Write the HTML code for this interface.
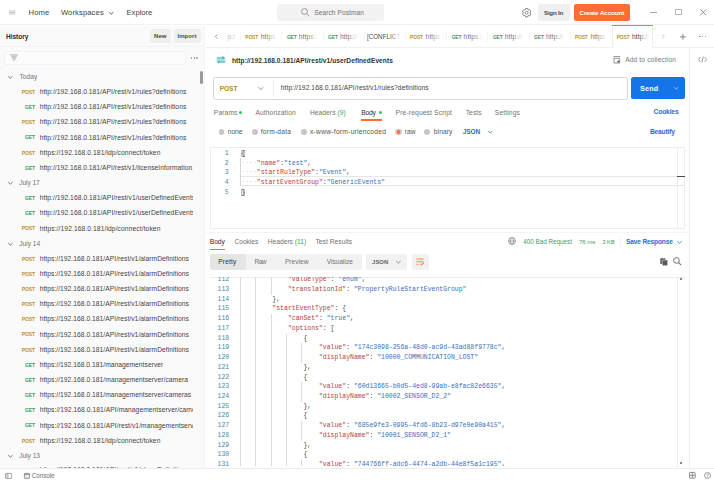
<!DOCTYPE html>
<html><head><meta charset="utf-8"><title>Postman</title>
<style>
*{box-sizing:border-box;margin:0;padding:0}
html,body{width:714px;height:480px;overflow:hidden;background:#fff}
body{position:relative;font-family:"Liberation Sans",sans-serif;color:#3a3a3a;font-size:6.5px}
.t{position:absolute;white-space:nowrap;line-height:10px;height:10px}
.b{font-weight:bold}
.abs{position:absolute}
.m{font-family:"Liberation Mono",monospace;font-size:6.47px;position:absolute;white-space:pre;line-height:9.74px;height:9.74px}
.k{color:#b54242}.s{color:#3570bd}.p{color:#4a4a4a}.d{color:#cfcfcf}
.ln{color:#3f8aa3;text-align:right}
.post{color:#bb9230;font-weight:bold}
.get{color:#37a062;font-weight:bold}
svg{position:absolute;overflow:visible}
</style></head><body>

<div class="abs" style="left:0;top:0;width:714px;height:25.4px;background:#fff;border-bottom:1px solid #f0f0f0"></div>
<svg style="left:9px;top:10px" width="6.4" height="5" viewBox="0 0 6.4 5"><path d="M0 1 H6.4 M0 2.5 H6.4 M0 4 H6.4" stroke="#b4b4b4" stroke-width="0.75"/></svg>
<div class="t" style="left:28.50px;top:7.70px;font-size:7.7px;letter-spacing:0.120px;color:#444;">Home</div>
<div class="t" style="left:60.90px;top:7.70px;font-size:7.7px;letter-spacing:0.075px;color:#444;">Workspaces</div>
<svg style="left:108.80px;top:11.75px" width="4.60" height="2.30" viewBox="0 0 10 5"><path d="M0.6 0.4 L5 4.6 L9.4 0.4" fill="none" stroke="#555" stroke-width="2.17"/></svg>
<div class="t" style="left:126.50px;top:7.70px;font-size:7.7px;letter-spacing:-0.035px;color:#444;">Explore</div>
<div class="abs" style="left:277px;top:4px;width:107px;height:17px;background:#f2f2f2;border-radius:2px"></div>
<svg style="left:301px;top:8.3px" width="9" height="9" viewBox="0 0 9 9"><circle cx="3.5" cy="3.5" r="2.9" fill="none" stroke="#777" stroke-width="0.7"/><path d="M5.6 5.6 L8.2 8.2" stroke="#777" stroke-width="0.7"/></svg>
<div class="t" style="left:314.30px;top:7.60px;font-size:6.6px;letter-spacing:0.062px;color:#737373;">Search Postman</div>
<svg style="left:521.9px;top:7.8px" width="9.4" height="9.4" viewBox="0 0 10 10"><path d="M3.73 0.58 L6.27 0.58 L6.29 1.64 L7.27 2.20 L8.20 1.69 L9.46 3.89 L8.56 4.44 L8.56 5.56 L9.46 6.11 L8.20 8.31 L7.27 7.80 L6.29 8.36 L6.27 9.42 L3.73 9.42 L3.71 8.36 L2.73 7.80 L1.80 8.31 L0.54 6.11 L1.44 5.56 L1.44 4.44 L0.54 3.89 L1.80 1.69 L2.73 2.20 L3.71 1.64 Z" fill="none" stroke="#707070" stroke-width="0.85" stroke-linejoin="round"/><circle cx="5" cy="5" r="1.5" fill="none" stroke="#707070" stroke-width="0.8"/></svg>
<div class="abs" style="left:537.5px;top:4.2px;width:32.3px;height:16.6px;background:#f0f0f0;border-radius:2px"></div>
<div class="t b" style="left:544.00px;top:7.60px;font-size:6.2px;letter-spacing:-0.244px;color:#4a4a4a;">Sign In</div>
<div class="abs" style="left:574.2px;top:4.2px;width:55.7px;height:16.6px;background:#ff6c37;border-radius:2px"></div>
<div class="t b" style="left:579.60px;top:7.60px;font-size:6.2px;letter-spacing:-0.061px;color:#fff;">Create Account</div>
<div class="abs" style="left:650px;top:11.8px;width:7px;height:0.8px;background:#a8a8a8"></div>
<div class="abs" style="left:675px;top:9.1px;width:6.6px;height:6.3px;border:0.8px solid #b8b8b8"></div>
<svg style="left:699.8px;top:9px" width="6.6" height="6.6" viewBox="0 0 7 7"><path d="M0.3 0.3 L6.7 6.7 M6.7 0.3 L0.3 6.7" stroke="#777" stroke-width="0.8"/></svg>
<div class="abs" style="left:0;top:26.4px;width:205.2px;height:442px;background:#fafafa;border-right:1px solid #f4f4f4"></div>
<div class="t b" style="left:5.90px;top:31.90px;font-size:6.6px;letter-spacing:-0.023px;color:#2a2a2a;">History</div>
<div class="abs" style="left:0;top:45.6px;width:205px;height:1px;background:#f3f3f3"></div>
<div class="abs" style="left:150px;top:29.4px;width:20.6px;height:13.4px;background:#efefef;border-radius:2px"></div>
<div class="t b" style="left:154.10px;top:31.00px;font-size:6.0px;letter-spacing:0.031px;color:#4a4a4a;">New</div>
<div class="abs" style="left:173.5px;top:29.4px;width:27.5px;height:13.4px;background:#efefef;border-radius:2px"></div>
<div class="t b" style="left:177.40px;top:31.00px;font-size:6.0px;letter-spacing:0.087px;color:#4a4a4a;">Import</div>
<div class="abs" style="left:4.4px;top:51px;width:181.4px;height:13.8px;background:#fcfcfc;border:1px solid #f2f2f2;border-radius:2px"></div>
<svg style="left:10.2px;top:54.2px" width="8" height="7.4" viewBox="0 0 8 7.4"><path d="M0 0.2 H8 L4.6 6.9 H3.4 Z" fill="#d6d6d6"/><path d="M0.2 0.8 H7.8 M1.3 2.6 H6.7 M2.3 4.4 H5.7 M3.2 6.1 H4.8" stroke="#c2c2c2" stroke-width="0.9" fill="none"/></svg>
<div class="abs" style="left:190.6px;top:57.3px;width:1.7px;height:1.7px;border-radius:1px;background:#9a9a9a"></div>
<div class="abs" style="left:193.5px;top:57.3px;width:1.7px;height:1.7px;border-radius:1px;background:#9a9a9a"></div>
<div class="abs" style="left:196.4px;top:57.3px;width:1.7px;height:1.7px;border-radius:1px;background:#9a9a9a"></div>
<div class="abs" style="left:200.4px;top:70.6px;width:3.1px;height:13px;background:#999;border-radius:1.5px"></div>
<div class="abs" style="left:0;top:66px;width:199px;height:402.7px;overflow:hidden">
<svg style="left:7.90px;top:9.90px" width="4.80" height="2.40" viewBox="0 0 10 5"><path d="M0.6 0.4 L5 4.6 L9.4 0.4" fill="none" stroke="#666" stroke-width="1.88"/></svg>
<div class="t" style="left:19.50px;top:5.90px;font-size:6.6px;letter-spacing:0.072px;color:#737373;">Today</div>
<div class="t post" style="left:14.9px;width:20px;text-align:right;top:20.86px;font-size:5px;letter-spacing:-0.12px">POST</div>
<div class="t" style="left:39.70px;top:21.06px;font-size:6.7px;letter-spacing:0.047px;color:#444;">http://192.168.0.181/API/rest/v1/rules?definitions</div>
<div class="t get" style="left:14.9px;width:20px;text-align:right;top:36.02px;font-size:5px;letter-spacing:-0.12px">GET</div>
<div class="t" style="left:39.70px;top:36.22px;font-size:6.7px;letter-spacing:0.047px;color:#444;">http://192.168.0.181/API/rest/v1/rules?definitions</div>
<div class="t post" style="left:14.9px;width:20px;text-align:right;top:51.18px;font-size:5px;letter-spacing:-0.12px">POST</div>
<div class="t" style="left:39.70px;top:51.38px;font-size:6.7px;letter-spacing:0.047px;color:#444;">http://192.168.0.181/API/rest/v1/rules?definitions</div>
<div class="t get" style="left:14.9px;width:20px;text-align:right;top:66.34px;font-size:5px;letter-spacing:-0.12px">GET</div>
<div class="t" style="left:39.70px;top:66.54px;font-size:6.7px;letter-spacing:0.047px;color:#444;">http://192.168.0.181/API/rest/v1/rules?definitions</div>
<div class="t post" style="left:14.9px;width:20px;text-align:right;top:81.50px;font-size:5px;letter-spacing:-0.12px">POST</div>
<div class="t" style="left:39.70px;top:81.70px;font-size:6.7px;letter-spacing:0.094px;color:#444;">https://192.168.0.181/idp/connect/token</div>
<div class="t get" style="left:14.9px;width:20px;text-align:right;top:96.66px;font-size:5px;letter-spacing:-0.12px">GET</div>
<div class="t" style="left:39.70px;top:96.86px;font-size:6.7px;letter-spacing:0.047px;color:#444;">http://192.168.0.181/API/rest/v1/licenseInformation</div>
<svg style="left:7.90px;top:116.02px" width="4.80" height="2.40" viewBox="0 0 10 5"><path d="M0.6 0.4 L5 4.6 L9.4 0.4" fill="none" stroke="#666" stroke-width="1.88"/></svg>
<div class="t" style="left:19.20px;top:112.02px;font-size:6.6px;letter-spacing:-0.052px;color:#737373;">July 17</div>
<div class="t get" style="left:14.9px;width:20px;text-align:right;top:126.98px;font-size:5px;letter-spacing:-0.12px">GET</div>
<div class="t" style="left:39.7px;width:153.1px;overflow:hidden;top:127.18px;font-size:6.7px;letter-spacing:0.062px;color:#444">http://192.168.0.181/API/rest/v1/userDefinedEvents</div>
<div class="t get" style="left:14.9px;width:20px;text-align:right;top:142.14px;font-size:5px;letter-spacing:-0.12px">GET</div>
<div class="t" style="left:39.7px;width:153.1px;overflow:hidden;top:142.34px;font-size:6.7px;letter-spacing:0.062px;color:#444">http://192.168.0.181/API/rest/v1/userDefinedEvents</div>
<div class="t post" style="left:14.9px;width:20px;text-align:right;top:157.30px;font-size:5px;letter-spacing:-0.12px">POST</div>
<div class="t" style="left:39.70px;top:157.50px;font-size:6.7px;letter-spacing:0.094px;color:#444;">https://192.168.0.181/idp/connect/token</div>
<svg style="left:7.90px;top:176.66px" width="4.80" height="2.40" viewBox="0 0 10 5"><path d="M0.6 0.4 L5 4.6 L9.4 0.4" fill="none" stroke="#666" stroke-width="1.88"/></svg>
<div class="t" style="left:19.20px;top:172.66px;font-size:6.6px;letter-spacing:0.015px;color:#737373;">July 14</div>
<div class="t post" style="left:14.9px;width:20px;text-align:right;top:187.62px;font-size:5px;letter-spacing:-0.12px">POST</div>
<div class="t" style="left:39.70px;top:187.82px;font-size:6.7px;letter-spacing:0.039px;color:#444;">https://192.168.0.181/API/rest/v1/alarmDefinitions</div>
<div class="t post" style="left:14.9px;width:20px;text-align:right;top:202.78px;font-size:5px;letter-spacing:-0.12px">POST</div>
<div class="t" style="left:39.70px;top:202.98px;font-size:6.7px;letter-spacing:0.039px;color:#444;">https://192.168.0.181/API/rest/v1/alarmDefinitions</div>
<div class="t post" style="left:14.9px;width:20px;text-align:right;top:217.94px;font-size:5px;letter-spacing:-0.12px">POST</div>
<div class="t" style="left:39.70px;top:218.14px;font-size:6.7px;letter-spacing:0.039px;color:#444;">https://192.168.0.181/API/rest/v1/alarmDefinitions</div>
<div class="t post" style="left:14.9px;width:20px;text-align:right;top:233.10px;font-size:5px;letter-spacing:-0.12px">POST</div>
<div class="t" style="left:39.70px;top:233.30px;font-size:6.7px;letter-spacing:0.039px;color:#444;">https://192.168.0.181/API/rest/v1/alarmDefinitions</div>
<div class="t post" style="left:14.9px;width:20px;text-align:right;top:248.26px;font-size:5px;letter-spacing:-0.12px">POST</div>
<div class="t" style="left:39.70px;top:248.46px;font-size:6.7px;letter-spacing:0.039px;color:#444;">https://192.168.0.181/API/rest/v1/alarmDefinitions</div>
<div class="t post" style="left:14.9px;width:20px;text-align:right;top:263.42px;font-size:5px;letter-spacing:-0.12px">POST</div>
<div class="t" style="left:39.70px;top:263.62px;font-size:6.7px;letter-spacing:0.039px;color:#444;">https://192.168.0.181/API/rest/v1/alarmDefinitions</div>
<div class="t post" style="left:14.9px;width:20px;text-align:right;top:278.58px;font-size:5px;letter-spacing:-0.12px">POST</div>
<div class="t" style="left:39.70px;top:278.78px;font-size:6.7px;letter-spacing:0.039px;color:#444;">https://192.168.0.181/API/rest/v1/alarmDefinitions</div>
<div class="t get" style="left:14.9px;width:20px;text-align:right;top:293.74px;font-size:5px;letter-spacing:-0.12px">GET</div>
<div class="t" style="left:39.70px;top:293.94px;font-size:6.7px;letter-spacing:0.034px;color:#444;">https://192.168.0.181/managementserver</div>
<div class="t get" style="left:14.9px;width:20px;text-align:right;top:308.90px;font-size:5px;letter-spacing:-0.12px">GET</div>
<div class="t" style="left:39.70px;top:309.10px;font-size:6.7px;letter-spacing:0.040px;color:#444;">https://192.168.0.181/managementserver/camera</div>
<div class="t get" style="left:14.9px;width:20px;text-align:right;top:324.06px;font-size:5px;letter-spacing:-0.12px">GET</div>
<div class="t" style="left:39.70px;top:324.26px;font-size:6.7px;letter-spacing:0.038px;color:#444;">https://192.168.0.181/managementserver/cameras</div>
<div class="t get" style="left:14.9px;width:20px;text-align:right;top:339.22px;font-size:5px;letter-spacing:-0.12px">GET</div>
<div class="t" style="left:39.7px;width:153.1px;overflow:hidden;top:339.42px;font-size:6.7px;letter-spacing:0.062px;color:#444">https://192.168.0.181/API/managementserver/cameras</div>
<div class="t get" style="left:14.9px;width:20px;text-align:right;top:354.38px;font-size:5px;letter-spacing:-0.12px">GET</div>
<div class="t" style="left:39.7px;width:153.1px;overflow:hidden;top:354.58px;font-size:6.7px;letter-spacing:0.062px;color:#444">https://192.168.0.181/API/rest/v1/managementserver</div>
<div class="t post" style="left:14.9px;width:20px;text-align:right;top:369.54px;font-size:5px;letter-spacing:-0.12px">POST</div>
<div class="t" style="left:39.70px;top:369.74px;font-size:6.7px;letter-spacing:0.094px;color:#444;">https://192.168.0.181/idp/connect/token</div>
<svg style="left:7.90px;top:388.90px" width="4.80" height="2.40" viewBox="0 0 10 5"><path d="M0.6 0.4 L5 4.6 L9.4 0.4" fill="none" stroke="#666" stroke-width="1.88"/></svg>
<div class="t" style="left:19.20px;top:384.90px;font-size:6.6px;letter-spacing:-0.019px;color:#737373;">July 13</div>
<div class="t" style="left:39.70px;top:398.90px;font-size:6.7px;letter-spacing:0.039px;color:#444;">https://192.168.0.181/API/rest/v1/alarmDefinitions</div>
</div>
<div class="abs" style="left:0;top:468.4px;width:714px;height:13px;background:#fff;border-top:1px solid #ececec"></div>
<svg style="left:5px;top:472.6px" width="7" height="5.8" viewBox="0 0 7 5.8"><rect x="0.4" y="0.4" width="6.2" height="5" rx="0.5" fill="none" stroke="#909090" stroke-width="0.8"/><path d="M2.9 0.4 V5.4" stroke="#909090" stroke-width="0.8"/><path d="M0.9 1.7 H2.4 M0.9 2.9 H2.4 M0.9 4.1 H2.4" stroke="#a8a8a8" stroke-width="0.6"/></svg>
<svg style="left:23.7px;top:472.7px" width="5.8" height="5.8" viewBox="0 0 6 6"><rect x="0.4" y="0.4" width="5.2" height="5.2" rx="0.6" fill="none" stroke="#777" stroke-width="0.8"/><path d="M0.4 1.6 H5.6" stroke="#777" stroke-width="0.8"/><path d="M1.5 2.8 L2.5 3.6 L1.5 4.4 M3 4.5 H4.4" fill="none" stroke="#777" stroke-width="0.5"/></svg>
<div class="t" style="left:31.80px;top:470.90px;font-size:6.5px;letter-spacing:-0.158px;color:#747474;">Console</div>
<svg style="left:689.3px;top:472.2px" width="6.6" height="6.6" viewBox="0 0 6.6 6.6"><rect x="0.45" y="0.45" width="5.7" height="5.7" rx="0.5" fill="none" stroke="#858585" stroke-width="0.9"/><path d="M3.3 0.4 V6.2 M0.4 3.3 H6.2" stroke="#858585" stroke-width="0.9"/></svg>
<svg style="left:704.4px;top:472.1px" width="7" height="7" viewBox="0 0 7 7"><circle cx="3.5" cy="3.5" r="3" fill="none" stroke="#858585" stroke-width="0.8"/><path d="M2.6 2.8 Q2.6 1.9 3.5 1.9 Q4.4 1.9 4.4 2.7 Q4.4 3.3 3.5 3.7 V4.3 M3.5 4.9 V5.5" fill="none" stroke="#858585" stroke-width="0.6"/></svg>
<div class="abs" style="left:688.8px;top:48px;width:26px;height:419.6px;background:#fff;border-left:1px solid #f0f0f0"></div>
<svg style="left:698px;top:56.4px" width="9.1" height="7" viewBox="0 0 9 7"><path d="M2.3 1 L0.5 3.5 L2.3 6 M6.7 1 L8.5 3.5 L6.7 6 M5.3 0.5 L3.7 6.5" fill="none" stroke="#777" stroke-width="0.7"/></svg>
<div class="abs" style="left:206px;top:26.4px;width:508px;height:21.6px;background:#fff;border-bottom:1px solid #f0f0f0"></div>
<svg style="left:215px;top:33.9px" width="2.6" height="5" viewBox="0 0 3 5"><path d="M2.6 0.3 L0.4 2.5 L2.6 4.7" fill="none" stroke="#666" stroke-width="0.8"/></svg>
<div class="t" style="left:227.4px;top:32.1px;font-size:6.6px;color:#c4c4c4">p:/</div>
<div class="abs" style="left:240.20px;top:31px;width:1px;height:11px;background:#f5f5f5"></div>
<div class="abs" style="left:242.00px;top:28px;width:39.70px;height:18px;overflow:hidden">
<div class="t post" style="left:3.3px;top:4.5px;font-size:4.9px;letter-spacing:-0.12px">POST</div>
<div class="t" style="left:18.8px;top:4.1px;font-size:6.7px;letter-spacing:0.07px;color:#777">https://192.168</div>
<div class="abs" style="left:24px;top:0;width:17.200000000000003px;height:18px;background:linear-gradient(90deg,rgba(255,255,255,0) 0,#fff 11px,#fff 100%)"></div>
</div>
<div class="abs" style="left:281.40px;top:31px;width:1px;height:11px;background:#f5f5f5"></div>
<div class="abs" style="left:283.20px;top:28px;width:39.70px;height:18px;overflow:hidden">
<div class="t get" style="left:3.7px;top:4.5px;font-size:4.9px;letter-spacing:-0.12px">GET</div>
<div class="t" style="left:15.6px;top:4.1px;font-size:6.7px;letter-spacing:0.07px;color:#777">https://192.168</div>
<div class="abs" style="left:24px;top:0;width:17.200000000000003px;height:18px;background:linear-gradient(90deg,rgba(255,255,255,0) 0,#fff 11px,#fff 100%)"></div>
</div>
<div class="abs" style="left:322.60px;top:31px;width:1px;height:11px;background:#f5f5f5"></div>
<div class="abs" style="left:324.40px;top:28px;width:39.70px;height:18px;overflow:hidden">
<div class="t get" style="left:3.7px;top:4.5px;font-size:4.9px;letter-spacing:-0.12px">GET</div>
<div class="t" style="left:15.6px;top:4.1px;font-size:6.7px;letter-spacing:0.07px;color:#777">http://192.168</div>
<div class="abs" style="left:24px;top:0;width:17.200000000000003px;height:18px;background:linear-gradient(90deg,rgba(255,255,255,0) 0,#fff 11px,#fff 100%)"></div>
</div>
<div class="abs" style="left:363.80px;top:31px;width:1px;height:11px;background:#f5f5f5"></div>
<div class="abs" style="left:365.60px;top:28px;width:39.70px;height:18px;overflow:hidden">
<div class="t" style="left:1.3px;top:4.1px;font-size:6.3px;color:#4a4a4a">[CONFLICT] POST</div>
<div class="abs" style="left:24px;top:0;width:17.200000000000003px;height:18px;background:linear-gradient(90deg,rgba(255,255,255,0) 0,#fff 11px,#fff 100%)"></div>
</div>
<div class="abs" style="left:405.00px;top:31px;width:1px;height:11px;background:#f5f5f5"></div>
<div class="abs" style="left:406.80px;top:28px;width:39.70px;height:18px;overflow:hidden">
<div class="t post" style="left:3.3px;top:4.5px;font-size:4.9px;letter-spacing:-0.12px">POST</div>
<div class="t" style="left:18.8px;top:4.1px;font-size:6.7px;letter-spacing:0.07px;color:#777">https://192.168</div>
<div class="abs" style="left:24px;top:0;width:17.200000000000003px;height:18px;background:linear-gradient(90deg,rgba(255,255,255,0) 0,#fff 11px,#fff 100%)"></div>
</div>
<div class="abs" style="left:446.20px;top:31px;width:1px;height:11px;background:#f5f5f5"></div>
<div class="abs" style="left:448.00px;top:28px;width:39.70px;height:18px;overflow:hidden">
<div class="t get" style="left:3.7px;top:4.5px;font-size:4.9px;letter-spacing:-0.12px">GET</div>
<div class="t" style="left:15.6px;top:4.1px;font-size:6.7px;letter-spacing:0.07px;color:#777">https://192.168</div>
<div class="abs" style="left:24px;top:0;width:17.200000000000003px;height:18px;background:linear-gradient(90deg,rgba(255,255,255,0) 0,#fff 11px,#fff 100%)"></div>
</div>
<div class="abs" style="left:487.40px;top:31px;width:1px;height:11px;background:#f5f5f5"></div>
<div class="abs" style="left:489.20px;top:28px;width:39.70px;height:18px;overflow:hidden">
<div class="t get" style="left:3.7px;top:4.5px;font-size:4.9px;letter-spacing:-0.12px">GET</div>
<div class="t" style="left:15.6px;top:4.1px;font-size:6.7px;letter-spacing:0.07px;color:#777">http://192.168</div>
<div class="abs" style="left:24px;top:0;width:17.200000000000003px;height:18px;background:linear-gradient(90deg,rgba(255,255,255,0) 0,#fff 11px,#fff 100%)"></div>
</div>
<div class="abs" style="left:528.60px;top:31px;width:1px;height:11px;background:#f5f5f5"></div>
<div class="abs" style="left:530.40px;top:28px;width:39.70px;height:18px;overflow:hidden">
<div class="t get" style="left:3.7px;top:4.5px;font-size:4.9px;letter-spacing:-0.12px">GET</div>
<div class="t" style="left:15.6px;top:4.1px;font-size:6.7px;letter-spacing:0.07px;color:#777">http://192.168</div>
<div class="abs" style="left:24px;top:0;width:17.200000000000003px;height:18px;background:linear-gradient(90deg,rgba(255,255,255,0) 0,#fff 11px,#fff 100%)"></div>
</div>
<div class="abs" style="left:569.80px;top:31px;width:1px;height:11px;background:#f5f5f5"></div>
<div class="abs" style="left:571.60px;top:28px;width:39.70px;height:18px;overflow:hidden">
<div class="t post" style="left:3.3px;top:4.5px;font-size:4.9px;letter-spacing:-0.12px">POST</div>
<div class="t" style="left:18.8px;top:4.1px;font-size:6.7px;letter-spacing:0.07px;color:#777">https://192.168</div>
<div class="abs" style="left:24px;top:0;width:17.200000000000003px;height:18px;background:linear-gradient(90deg,rgba(255,255,255,0) 0,#fff 11px,#fff 100%)"></div>
</div>
<div class="abs" style="left:612.20px;top:24.8px;width:41.20px;height:23.6px;background:#fff;border-left:1px solid #f0f0f0;border-right:1px solid #f0f0f0"></div>
<div class="abs" style="left:612.20px;top:24.8px;width:41.20px;height:1.6px;background:#ff7645"></div>
<div class="abs" style="left:612.80px;top:28px;width:39.70px;height:18px;overflow:hidden">
<div class="t post" style="left:3.9px;top:4.5px;font-size:4.9px;letter-spacing:-0.12px">POST</div>
<div class="t" style="left:19.2px;top:4.1px;font-size:6.7px;letter-spacing:0.07px;color:#4a4a4a">http://192.168</div>
<div class="abs" style="left:26px;top:0;width:15.200000000000003px;height:18px;background:linear-gradient(90deg,rgba(255,255,255,0) 0,#fff 11px,#fff 100%)"></div>
</div>
<svg style="left:662.2px;top:33.9px" width="2.6" height="5" viewBox="0 0 3 5"><path d="M0.4 0.3 L2.6 2.5 L0.4 4.7" fill="none" stroke="#aaa" stroke-width="0.8"/></svg>
<svg style="left:680.2px;top:33.5px" width="5.8" height="5.8" viewBox="0 0 6 6"><path d="M3 0 V6 M0 3 H6" stroke="#777" stroke-width="0.9"/></svg>
<div class="abs" style="left:698.9px;top:35.7px;width:1.7px;height:1.7px;border-radius:1px;background:#8a8a8a"></div>
<div class="abs" style="left:701.8px;top:35.7px;width:1.7px;height:1.7px;border-radius:1px;background:#8a8a8a"></div>
<div class="abs" style="left:704.6999999999999px;top:35.7px;width:1.7px;height:1.7px;border-radius:1px;background:#8a8a8a"></div>
<svg style="left:216.2px;top:56.2px" width="10" height="7.8" viewBox="0 0 10 8"><rect x="0.6" y="0.8" width="8.8" height="6.4" rx="0.8" fill="#c9ecef"/><path d="M0.8 1.9 H7.8 M6.6 0.5 L8.2 1.9 L6.6 3.3 M9.2 6.1 H2.2 M3.4 4.7 L1.8 6.1 L3.4 7.5" fill="none" stroke="#58bcc5" stroke-width="1.2"/><path d="M0.6 4 H9.4" stroke="#7fd0d6" stroke-width="1.2" stroke-dasharray="1.4 0.7"/></svg>
<div class="t b" style="left:232.00px;top:55.80px;font-size:6.6px;letter-spacing:0.059px;color:#333;">http://192.168.0.181/API/rest/v1/userDefinedEvents</div>
<svg style="left:613.1px;top:56px" width="7.7" height="7.7" viewBox="0 0 8 8"><path d="M0.5 0.6 H7.5 M1 2.4 H7 V7.3 H1 Z" fill="none" stroke="#666" stroke-width="0.7"/><rect x="4.6" y="4.8" width="2" height="2" fill="#555"/></svg>
<div class="t" style="left:625.20px;top:55.30px;font-size:6.6px;letter-spacing:0.154px;color:#7a7a7a;">Add to collection</div>
<div class="abs" style="left:213.3px;top:76.9px;width:414.5px;height:22.9px;background:#fff;border:1px solid #d6d6d6;border-radius:2.5px"></div>
<div class="abs" style="left:273.3px;top:80.5px;width:1px;height:16px;background:#eeeeee"></div>
<div class="t b" style="left:219.70px;top:84.10px;font-size:6.6px;letter-spacing:-0.057px;color:#b88a1c;">POST</div>
<svg style="left:258.30px;top:87.28px" width="5.70" height="2.85" viewBox="0 0 10 5"><path d="M0.6 0.4 L5 4.6 L9.4 0.4" fill="none" stroke="#777" stroke-width="1.40"/></svg>
<div class="t" style="left:280.8px;top:82.8px;font-size:6.7px;letter-spacing:0.075px;color:#444">http://192.168.0.181/API/rest/v1/rules?definitions</div>
<div class="abs" style="left:631.3px;top:77.4px;width:54px;height:21.7px;background:#1474e8;border-radius:2.5px"></div>
<div class="t b" style="left:640.10px;top:83.60px;font-size:7.2px;letter-spacing:0.199px;color:#fff;">Send</div>
<svg style="left:674.30px;top:87.35px" width="4.60" height="2.30" viewBox="0 0 10 5"><path d="M0.6 0.4 L5 4.6 L9.4 0.4" fill="none" stroke="#bcd8fa" stroke-width="1.74"/></svg>
<div class="t" style="left:213.80px;top:107.60px;font-size:6.7px;letter-spacing:0.123px;color:#737373;">Params</div>
<div class="abs" style="left:239.2px;top:110.8px;width:3.3px;height:3.3px;border-radius:2px;background:#2cc466"></div>
<div class="t" style="left:255.40px;top:107.60px;font-size:6.7px;letter-spacing:0.108px;color:#737373;">Authorization</div>
<div class="t" style="left:310.00px;top:107.60px;font-size:6.7px;letter-spacing:0.032px;color:#737373;">Headers <span style="color:#37a062">(9)</span></div>
<div class="t" style="left:361.30px;top:107.60px;font-size:6.7px;letter-spacing:-0.224px;color:#2e2e2e;">Body</div>
<div class="abs" style="left:379.1px;top:110.8px;width:3.3px;height:3.3px;border-radius:2px;background:#2cc466"></div>
<div class="abs" style="left:361.3px;top:119.4px;width:21px;height:1.2px;background:#ff6c37"></div>
<div class="t" style="left:395.60px;top:107.60px;font-size:6.7px;letter-spacing:0.141px;color:#737373;">Pre-request Script</div>
<div class="t" style="left:465.70px;top:107.60px;font-size:6.7px;letter-spacing:0.091px;color:#737373;">Tests</div>
<div class="t" style="left:494.80px;top:107.60px;font-size:6.7px;letter-spacing:0.127px;color:#737373;">Settings</div>
<div class="t b" style="left:653.60px;top:106.80px;font-size:6.7px;letter-spacing:-0.161px;color:#2b6bd0;">Cookies</div>
<div class="abs" style="left:218.55px;top:129.05px;width:5.9px;height:5.9px;border-radius:3px;background:#c6c6c6"></div>
<div class="t" style="left:227.70px;top:127.00px;font-size:6.7px;letter-spacing:-0.002px;color:#555;">none</div>
<div class="abs" style="left:252.05px;top:129.05px;width:5.9px;height:5.9px;border-radius:3px;background:#c6c6c6"></div>
<div class="t" style="left:260.80px;top:127.00px;font-size:6.7px;letter-spacing:0.191px;color:#555;">form-data</div>
<div class="abs" style="left:301.05px;top:129.05px;width:5.9px;height:5.9px;border-radius:3px;background:#c6c6c6"></div>
<div class="t" style="left:310.00px;top:127.00px;font-size:6.7px;letter-spacing:0.249px;color:#555;">x-www-form-urlencoded</div>
<div class="abs" style="left:395.20px;top:128.70px;width:6.6px;height:6.6px;border-radius:3.4px;background:#d2c8c4"></div>
<div class="abs" style="left:396.60px;top:130.10px;width:3.8px;height:3.8px;border-radius:2px;background:#ff6c37"></div>
<div class="t" style="left:404.70px;top:127.00px;font-size:6.7px;letter-spacing:0.052px;color:#555;">raw</div>
<div class="abs" style="left:424.25px;top:129.05px;width:5.9px;height:5.9px;border-radius:3px;background:#c6c6c6"></div>
<div class="t" style="left:433.80px;top:127.00px;font-size:6.7px;letter-spacing:0.070px;color:#555;">binary</div>
<div class="t b" style="left:462.70px;top:126.80px;font-size:6.5px;letter-spacing:-0.067px;color:#2b6bd0;">JSON</div>
<svg style="left:488.40px;top:131.20px" width="4.40" height="2.20" viewBox="0 0 10 5"><path d="M0.6 0.4 L5 4.6 L9.4 0.4" fill="none" stroke="#2b6bd0" stroke-width="1.82"/></svg>
<div class="t b" style="left:649.90px;top:126.50px;font-size:6.7px;letter-spacing:-0.191px;color:#2b6bd0;">Beautify</div>
<div class="abs" style="left:210.2px;top:147.4px;width:475.3px;height:81.9px;background:#fff;border:1px solid #ededed"></div>
<div class="abs" style="left:676.8px;top:148px;width:1px;height:80px;background:#ededed"></div>
<div class="abs" style="left:241px;top:176px;width:443.5px;height:10.2px;border-top:1px solid #e6e6e6;border-bottom:1px solid #e6e6e6"></div>
<div class="abs" style="left:677.3px;top:175.8px;width:7.5px;height:1.3px;background:#4a4a4a"></div>
<div class="abs" style="left:240.4px;top:157.6px;width:0.7px;height:28.6px;background:#d6d6d6"></div>
<div class="abs" style="left:241px;top:149.6px;width:4.2px;height:7.6px;border:0.6px solid #bdbdbd;background:rgba(0,0,0,0.04)"></div>
<div class="abs" style="left:241px;top:188.5px;width:4.2px;height:7.6px;border:0.6px solid #bdbdbd;background:rgba(0,0,0,0.04)"></div>
<div class="m ln" style="left:215px;width:13.6px;top:149.13px">1</div>
<div class="m" style="left:241.3px;top:149.13px"><span class="p">{</span></div>
<div class="m ln" style="left:215px;width:13.6px;top:158.79px">2</div>
<div class="m" style="left:241.3px;top:158.79px"><span class="d">····</span><span class="k">"name"</span><span class="p">:</span><span class="s">"test"</span><span class="p">,</span></div>
<div class="m ln" style="left:215px;width:13.6px;top:168.45px">3</div>
<div class="m" style="left:241.3px;top:168.45px"><span class="d">····</span><span class="k">"startRuleType"</span><span class="p">:</span><span class="s">"Event"</span><span class="p">,</span></div>
<div class="m ln" style="left:215px;width:13.6px;top:178.11px">4</div>
<div class="m" style="left:241.3px;top:178.11px"><span class="d">····</span><span class="k">"startEventGroup"</span><span class="p">:</span><span class="s">"GenericEvents"</span></div>
<div class="m ln" style="left:215px;width:13.6px;top:187.77px">5</div>
<div class="m" style="left:241.3px;top:187.77px"><span class="p">}</span></div>
<div class="abs" style="left:206px;top:231.6px;width:484px;height:1px;background:#f4f4f4"></div>
<div class="t" style="left:209.80px;top:236.50px;font-size:6.7px;letter-spacing:-0.091px;color:#2e2e2e;">Body</div>
<div class="abs" style="left:209.8px;top:248.5px;width:15px;height:1.2px;background:#ff6c37"></div>
<div class="t" style="left:234.60px;top:236.50px;font-size:6.7px;letter-spacing:-0.084px;color:#737373;">Cookies</div>
<div class="t" style="left:267.70px;top:236.50px;font-size:6.7px;letter-spacing:-0.000px;color:#737373;">Headers <span style="color:#37a062">(11)</span></div>
<div class="t" style="left:315.40px;top:236.50px;font-size:6.7px;letter-spacing:0.028px;color:#737373;">Test Results</div>
<svg style="left:507.9px;top:237.4px" width="8" height="8" viewBox="0 0 8 8"><circle cx="4" cy="4" r="3.4" fill="none" stroke="#777" stroke-width="0.7"/><ellipse cx="4" cy="4" rx="1.5" ry="3.4" fill="none" stroke="#777" stroke-width="0.6"/><path d="M0.6 4 H7.4" stroke="#777" stroke-width="0.6"/></svg>
<div class="t" style="left:523.20px;top:236.50px;font-size:6.3px;letter-spacing:0.008px;color:#4e9a66;">400 Bad Request</div>
<div class="t" style="left:578.90px;top:236.50px;font-size:6.2px;letter-spacing:-0.121px;color:#4e9a66;">76 ms</div>
<div class="t" style="left:602.20px;top:236.50px;font-size:6.1px;letter-spacing:-0.208px;color:#4e9a66;">3 KB</div>
<div class="abs" style="left:619.8px;top:236.3px;width:1px;height:10.4px;background:#f3f3f3"></div>
<div class="t b" style="left:625.90px;top:236.50px;font-size:6.6px;letter-spacing:-0.149px;color:#2b6bd0;">Save Response</div>
<svg style="left:677.00px;top:240.55px" width="5.00" height="2.50" viewBox="0 0 10 5"><path d="M0.6 0.4 L5 4.6 L9.4 0.4" fill="none" stroke="#2b6bd0" stroke-width="1.60"/></svg>
<div class="abs" style="left:209.8px;top:254.1px;width:151.8px;height:16.3px;background:#f2f2f2;border-radius:2px"></div>
<div class="abs" style="left:209.6px;top:254.1px;width:36.2px;height:16.3px;background:#e5e5e5;border-radius:2px"></div>
<div class="t" style="left:218.20px;top:257.20px;font-size:6.6px;letter-spacing:0.192px;color:#2e2e2e;">Pretty</div>
<div class="t" style="left:254.60px;top:257.20px;font-size:6.6px;letter-spacing:-0.602px;color:#737373;">Raw</div>
<div class="t" style="left:284.90px;top:257.20px;font-size:6.6px;letter-spacing:0.021px;color:#737373;">Preview</div>
<div class="t" style="left:326.70px;top:257.20px;font-size:6.6px;letter-spacing:0.001px;color:#737373;">Visualize</div>
<div class="abs" style="left:366.2px;top:254.1px;width:40.8px;height:16.3px;background:#f2f2f2;border-radius:2px"></div>
<div class="t b" style="left:372.10px;top:257.20px;font-size:5.9px;letter-spacing:0.011px;color:#636363;">JSON</div>
<svg style="left:395.60px;top:261.30px" width="4.80" height="2.40" viewBox="0 0 10 5"><path d="M0.6 0.4 L5 4.6 L9.4 0.4" fill="none" stroke="#777" stroke-width="1.67"/></svg>
<div class="abs" style="left:412px;top:254px;width:16.7px;height:16.3px;background:#f2f2f2;border-radius:2px"></div>
<svg style="left:416.3px;top:258.4px" width="8" height="8" viewBox="0 0 8 8"><path d="M0.3 1 H7.7 M0.3 3.7 H6.2 Q7.6 3.7 7.6 5 Q7.6 6.3 6.2 6.3 H4.6 M0.3 6.3 H2.6" fill="none" stroke="#ff6c37" stroke-width="0.8"/><path d="M5.4 5.3 L4.3 6.3 L5.4 7.3" fill="none" stroke="#ff6c37" stroke-width="0.7"/></svg>
<svg style="left:659.8px;top:257.6px" width="8" height="8" viewBox="0 0 8 8"><rect x="0.3" y="0.3" width="5.2" height="5.8" rx="0.4" fill="#5a5a5a"/><rect x="2.2" y="1.9" width="5.5" height="5.8" rx="0.4" fill="#5a5a5a" stroke="#fff" stroke-width="0.5"/></svg>
<svg style="left:672.5px;top:257.4px" width="8.4" height="8.4" viewBox="0 0 8 8"><circle cx="3.3" cy="3.3" r="2.7" fill="none" stroke="#666" stroke-width="0.9"/><path d="M5.3 5.3 L7.6 7.6" stroke="#666" stroke-width="1"/></svg>
<div class="abs" style="left:210px;top:276.6px;width:475px;height:1px;background:#ececec"></div>
<div class="abs" style="left:676.8px;top:277px;width:1px;height:189.5px;background:#ededed"></div>
<div class="abs" style="left:680.3px;top:277.6px;width:2px;height:2px;background:#8a8a8a"></div>
<div class="abs" style="left:680.3px;top:462.3px;width:2px;height:2px;background:#8a8a8a"></div>
<div class="abs" style="left:207px;top:277.4px;width:469.6px;height:188.2px;overflow:hidden">
<div class="m ln" style="left:8px;width:14.2px;top:-2.27px">112</div>
<div class="m" style="left:80.90px;top:-2.27px"><span class="k">"valueType"</span><span class="p">: </span><span class="s">"enum"</span><span class="p">,</span></div>
<div class="abs" style="left:32.60px;top:-2.27px;width:0.7px;height:9.74px;background:#dcdcdc"></div>
<div class="abs" style="left:48.05px;top:-2.27px;width:0.7px;height:9.74px;background:#dcdcdc"></div>
<div class="abs" style="left:63.50px;top:-2.27px;width:0.7px;height:9.74px;background:#dcdcdc"></div>
<div class="m ln" style="left:8px;width:14.2px;top:7.47px">113</div>
<div class="m" style="left:80.90px;top:7.47px"><span class="k">"translationId"</span><span class="p">: </span><span class="s">"PropertyRuleStartEventGroup"</span></div>
<div class="abs" style="left:32.60px;top:7.47px;width:0.7px;height:9.74px;background:#dcdcdc"></div>
<div class="abs" style="left:48.05px;top:7.47px;width:0.7px;height:9.74px;background:#dcdcdc"></div>
<div class="abs" style="left:63.50px;top:7.47px;width:0.7px;height:9.74px;background:#dcdcdc"></div>
<div class="m ln" style="left:8px;width:14.2px;top:17.21px">114</div>
<div class="m" style="left:65.36px;top:17.21px"><span class="p">},</span></div>
<div class="abs" style="left:32.60px;top:17.21px;width:0.7px;height:9.74px;background:#dcdcdc"></div>
<div class="abs" style="left:48.05px;top:17.21px;width:0.7px;height:9.74px;background:#dcdcdc"></div>
<div class="m ln" style="left:8px;width:14.2px;top:26.95px">115</div>
<div class="m" style="left:65.36px;top:26.95px"><span class="k">"startEventType"</span><span class="p">: {</span></div>
<div class="abs" style="left:32.60px;top:26.95px;width:0.7px;height:9.74px;background:#dcdcdc"></div>
<div class="abs" style="left:48.05px;top:26.95px;width:0.7px;height:9.74px;background:#dcdcdc"></div>
<div class="m ln" style="left:8px;width:14.2px;top:36.69px">116</div>
<div class="m" style="left:80.90px;top:36.69px"><span class="k">"canSet"</span><span class="p">: </span><span class="s">"true"</span><span class="p">,</span></div>
<div class="abs" style="left:32.60px;top:36.69px;width:0.7px;height:9.74px;background:#dcdcdc"></div>
<div class="abs" style="left:48.05px;top:36.69px;width:0.7px;height:9.74px;background:#dcdcdc"></div>
<div class="abs" style="left:63.50px;top:36.69px;width:0.7px;height:9.74px;background:#dcdcdc"></div>
<div class="m ln" style="left:8px;width:14.2px;top:46.43px">117</div>
<div class="m" style="left:80.90px;top:46.43px"><span class="k">"options"</span><span class="p">: [</span></div>
<div class="abs" style="left:32.60px;top:46.43px;width:0.7px;height:9.74px;background:#dcdcdc"></div>
<div class="abs" style="left:48.05px;top:46.43px;width:0.7px;height:9.74px;background:#dcdcdc"></div>
<div class="abs" style="left:63.50px;top:46.43px;width:0.7px;height:9.74px;background:#dcdcdc"></div>
<div class="m ln" style="left:8px;width:14.2px;top:56.17px">118</div>
<div class="m" style="left:96.43px;top:56.17px"><span class="p">{</span></div>
<div class="abs" style="left:32.60px;top:56.17px;width:0.7px;height:9.74px;background:#dcdcdc"></div>
<div class="abs" style="left:48.05px;top:56.17px;width:0.7px;height:9.74px;background:#dcdcdc"></div>
<div class="abs" style="left:63.50px;top:56.17px;width:0.7px;height:9.74px;background:#dcdcdc"></div>
<div class="abs" style="left:78.95px;top:56.17px;width:0.7px;height:9.74px;background:#dcdcdc"></div>
<div class="m ln" style="left:8px;width:14.2px;top:65.91px">119</div>
<div class="m" style="left:111.96px;top:65.91px"><span class="k">"value"</span><span class="p">: </span><span class="s">"174c3098-256a-48d0-ac9d-43ad88f9778c"</span><span class="p">,</span></div>
<div class="abs" style="left:32.60px;top:65.91px;width:0.7px;height:9.74px;background:#dcdcdc"></div>
<div class="abs" style="left:48.05px;top:65.91px;width:0.7px;height:9.74px;background:#dcdcdc"></div>
<div class="abs" style="left:63.50px;top:65.91px;width:0.7px;height:9.74px;background:#dcdcdc"></div>
<div class="abs" style="left:78.95px;top:65.91px;width:0.7px;height:9.74px;background:#dcdcdc"></div>
<div class="abs" style="left:94.40px;top:65.91px;width:0.7px;height:9.74px;background:#dcdcdc"></div>
<div class="m ln" style="left:8px;width:14.2px;top:75.65px">120</div>
<div class="m" style="left:111.96px;top:75.65px"><span class="k">"displayName"</span><span class="p">: </span><span class="s">"10000_COMMUNICATION_LOST"</span></div>
<div class="abs" style="left:32.60px;top:75.65px;width:0.7px;height:9.74px;background:#dcdcdc"></div>
<div class="abs" style="left:48.05px;top:75.65px;width:0.7px;height:9.74px;background:#dcdcdc"></div>
<div class="abs" style="left:63.50px;top:75.65px;width:0.7px;height:9.74px;background:#dcdcdc"></div>
<div class="abs" style="left:78.95px;top:75.65px;width:0.7px;height:9.74px;background:#dcdcdc"></div>
<div class="abs" style="left:94.40px;top:75.65px;width:0.7px;height:9.74px;background:#dcdcdc"></div>
<div class="m ln" style="left:8px;width:14.2px;top:85.39px">121</div>
<div class="m" style="left:96.43px;top:85.39px"><span class="p">},</span></div>
<div class="abs" style="left:32.60px;top:85.39px;width:0.7px;height:9.74px;background:#dcdcdc"></div>
<div class="abs" style="left:48.05px;top:85.39px;width:0.7px;height:9.74px;background:#dcdcdc"></div>
<div class="abs" style="left:63.50px;top:85.39px;width:0.7px;height:9.74px;background:#dcdcdc"></div>
<div class="abs" style="left:78.95px;top:85.39px;width:0.7px;height:9.74px;background:#dcdcdc"></div>
<div class="m ln" style="left:8px;width:14.2px;top:95.13px">122</div>
<div class="m" style="left:96.43px;top:95.13px"><span class="p">{</span></div>
<div class="abs" style="left:32.60px;top:95.13px;width:0.7px;height:9.74px;background:#dcdcdc"></div>
<div class="abs" style="left:48.05px;top:95.13px;width:0.7px;height:9.74px;background:#dcdcdc"></div>
<div class="abs" style="left:63.50px;top:95.13px;width:0.7px;height:9.74px;background:#dcdcdc"></div>
<div class="abs" style="left:78.95px;top:95.13px;width:0.7px;height:9.74px;background:#dcdcdc"></div>
<div class="m ln" style="left:8px;width:14.2px;top:104.87px">123</div>
<div class="m" style="left:111.96px;top:104.87px"><span class="k">"value"</span><span class="p">: </span><span class="s">"60d13665-b0d5-4ed8-99ab-e8fac82e6635"</span><span class="p">,</span></div>
<div class="abs" style="left:32.60px;top:104.87px;width:0.7px;height:9.74px;background:#dcdcdc"></div>
<div class="abs" style="left:48.05px;top:104.87px;width:0.7px;height:9.74px;background:#dcdcdc"></div>
<div class="abs" style="left:63.50px;top:104.87px;width:0.7px;height:9.74px;background:#dcdcdc"></div>
<div class="abs" style="left:78.95px;top:104.87px;width:0.7px;height:9.74px;background:#dcdcdc"></div>
<div class="abs" style="left:94.40px;top:104.87px;width:0.7px;height:9.74px;background:#dcdcdc"></div>
<div class="m ln" style="left:8px;width:14.2px;top:114.61px">124</div>
<div class="m" style="left:111.96px;top:114.61px"><span class="k">"displayName"</span><span class="p">: </span><span class="s">"10002_SENSOR_D2_2"</span></div>
<div class="abs" style="left:32.60px;top:114.61px;width:0.7px;height:9.74px;background:#dcdcdc"></div>
<div class="abs" style="left:48.05px;top:114.61px;width:0.7px;height:9.74px;background:#dcdcdc"></div>
<div class="abs" style="left:63.50px;top:114.61px;width:0.7px;height:9.74px;background:#dcdcdc"></div>
<div class="abs" style="left:78.95px;top:114.61px;width:0.7px;height:9.74px;background:#dcdcdc"></div>
<div class="abs" style="left:94.40px;top:114.61px;width:0.7px;height:9.74px;background:#dcdcdc"></div>
<div class="m ln" style="left:8px;width:14.2px;top:124.35px">125</div>
<div class="m" style="left:96.43px;top:124.35px"><span class="p">},</span></div>
<div class="abs" style="left:32.60px;top:124.35px;width:0.7px;height:9.74px;background:#dcdcdc"></div>
<div class="abs" style="left:48.05px;top:124.35px;width:0.7px;height:9.74px;background:#dcdcdc"></div>
<div class="abs" style="left:63.50px;top:124.35px;width:0.7px;height:9.74px;background:#dcdcdc"></div>
<div class="abs" style="left:78.95px;top:124.35px;width:0.7px;height:9.74px;background:#dcdcdc"></div>
<div class="m ln" style="left:8px;width:14.2px;top:134.09px">126</div>
<div class="m" style="left:96.43px;top:134.09px"><span class="p">{</span></div>
<div class="abs" style="left:32.60px;top:134.09px;width:0.7px;height:9.74px;background:#dcdcdc"></div>
<div class="abs" style="left:48.05px;top:134.09px;width:0.7px;height:9.74px;background:#dcdcdc"></div>
<div class="abs" style="left:63.50px;top:134.09px;width:0.7px;height:9.74px;background:#dcdcdc"></div>
<div class="abs" style="left:78.95px;top:134.09px;width:0.7px;height:9.74px;background:#dcdcdc"></div>
<div class="m ln" style="left:8px;width:14.2px;top:143.83px">127</div>
<div class="m" style="left:111.96px;top:143.83px"><span class="k">"value"</span><span class="p">: </span><span class="s">"685e9fe3-0995-4fd6-8b23-d97e0e90a415"</span><span class="p">,</span></div>
<div class="abs" style="left:32.60px;top:143.83px;width:0.7px;height:9.74px;background:#dcdcdc"></div>
<div class="abs" style="left:48.05px;top:143.83px;width:0.7px;height:9.74px;background:#dcdcdc"></div>
<div class="abs" style="left:63.50px;top:143.83px;width:0.7px;height:9.74px;background:#dcdcdc"></div>
<div class="abs" style="left:78.95px;top:143.83px;width:0.7px;height:9.74px;background:#dcdcdc"></div>
<div class="abs" style="left:94.40px;top:143.83px;width:0.7px;height:9.74px;background:#dcdcdc"></div>
<div class="m ln" style="left:8px;width:14.2px;top:153.57px">128</div>
<div class="m" style="left:111.96px;top:153.57px"><span class="k">"displayName"</span><span class="p">: </span><span class="s">"10001_SENSOR_D2_1"</span></div>
<div class="abs" style="left:32.60px;top:153.57px;width:0.7px;height:9.74px;background:#dcdcdc"></div>
<div class="abs" style="left:48.05px;top:153.57px;width:0.7px;height:9.74px;background:#dcdcdc"></div>
<div class="abs" style="left:63.50px;top:153.57px;width:0.7px;height:9.74px;background:#dcdcdc"></div>
<div class="abs" style="left:78.95px;top:153.57px;width:0.7px;height:9.74px;background:#dcdcdc"></div>
<div class="abs" style="left:94.40px;top:153.57px;width:0.7px;height:9.74px;background:#dcdcdc"></div>
<div class="m ln" style="left:8px;width:14.2px;top:163.31px">129</div>
<div class="m" style="left:96.43px;top:163.31px"><span class="p">},</span></div>
<div class="abs" style="left:32.60px;top:163.31px;width:0.7px;height:9.74px;background:#dcdcdc"></div>
<div class="abs" style="left:48.05px;top:163.31px;width:0.7px;height:9.74px;background:#dcdcdc"></div>
<div class="abs" style="left:63.50px;top:163.31px;width:0.7px;height:9.74px;background:#dcdcdc"></div>
<div class="abs" style="left:78.95px;top:163.31px;width:0.7px;height:9.74px;background:#dcdcdc"></div>
<div class="m ln" style="left:8px;width:14.2px;top:173.05px">130</div>
<div class="m" style="left:96.43px;top:173.05px"><span class="p">{</span></div>
<div class="abs" style="left:32.60px;top:173.05px;width:0.7px;height:9.74px;background:#dcdcdc"></div>
<div class="abs" style="left:48.05px;top:173.05px;width:0.7px;height:9.74px;background:#dcdcdc"></div>
<div class="abs" style="left:63.50px;top:173.05px;width:0.7px;height:9.74px;background:#dcdcdc"></div>
<div class="abs" style="left:78.95px;top:173.05px;width:0.7px;height:9.74px;background:#dcdcdc"></div>
<div class="m ln" style="left:8px;width:14.2px;top:182.79px">131</div>
<div class="m" style="left:111.96px;top:182.79px"><span class="k">"value"</span><span class="p">: </span><span class="s">"744766ff-adc6-4474-a2db-44e8f5a1c195"</span><span class="p">,</span></div>
<div class="abs" style="left:32.60px;top:182.79px;width:0.7px;height:9.74px;background:#dcdcdc"></div>
<div class="abs" style="left:48.05px;top:182.79px;width:0.7px;height:9.74px;background:#dcdcdc"></div>
<div class="abs" style="left:63.50px;top:182.79px;width:0.7px;height:9.74px;background:#dcdcdc"></div>
<div class="abs" style="left:78.95px;top:182.79px;width:0.7px;height:9.74px;background:#dcdcdc"></div>
<div class="abs" style="left:94.40px;top:182.79px;width:0.7px;height:9.74px;background:#dcdcdc"></div>
</div>
</body></html>
